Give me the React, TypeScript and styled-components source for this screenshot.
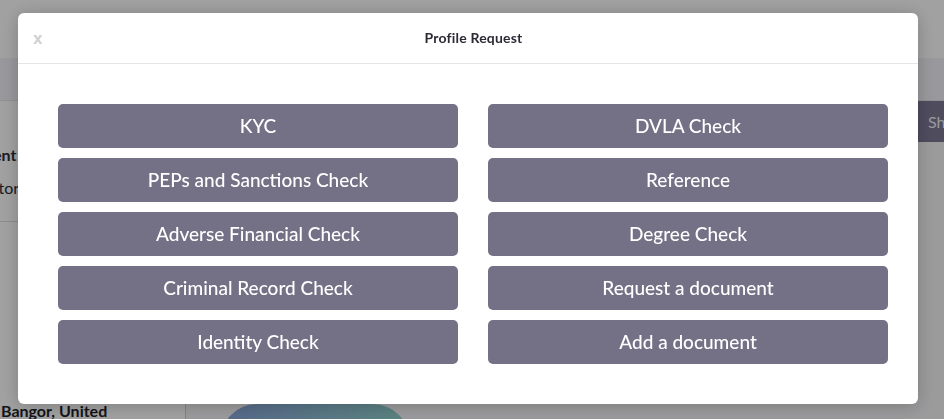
import React from "react";
import styled, { createGlobalStyle } from "styled-components";

const GlobalStyle = createGlobalStyle`
	html, body {
		margin: 0;
		padding: 0;
		height: 100%;
		overflow: hidden;
		font-family: Lato, "Open Sans", sans-serif;
		background: #f6f6f8;
	}
	#root {
		height: 100%;
	}
`;

const leftChecks = [
	"KYC",
	"PEPs and Sanctions Check",
	"Adverse Financial Check",
	"Criminal Record Check",
	"Identity Check"
];
const rightChecks = [
	"DVLA Check",
	"Reference",
	"Degree Check",
	"Request a document",
	"Add a document"
];

const Page = styled.div`
	height: 419px;
	display: flex;
	flex-direction: column;
	overflow: hidden;
`;
const TopBar = styled.header`
	height: 58px;
	background: #ffffff;
	flex-shrink: 0;
`;
const SubBar = styled.div`
	height: 42px;
	background: #f3f3f9;
	border-bottom: 1px solid #e4e4ea;
	flex-shrink: 0;
`;
const Body = styled.div`
	flex: 1;
	display: flex;
	min-height: 0;
`;
const Sidebar = styled.aside`
	width: 185px;
	background: #ffffff;
	border-right: 1px solid #cfcfd4;
	display: flex;
	flex-direction: column;
	overflow: hidden;
`;
const ProfileBlock = styled.div`
	height: 121px;
	border-bottom: 1px solid #dcdce0;
	padding-top: 44px;
	box-sizing: border-box;
`;
const Name = styled.div<{ $shift: number }>`
	margin-left: ${p => p.$shift}px;
	font-size: 16px;
	font-weight: 700;
	color: #2d2d3a;
	white-space: nowrap;
`;
const Role = styled.div<{ $shift: number }>`
	margin-left: ${p => p.$shift}px;
	margin-top: 14px;
	font-size: 16px;
	color: #2d2d3a;
	white-space: nowrap;
`;
const Location = styled.div`
	margin-top: auto;
	padding-left: 1px;
	height: 18px;
	font-size: 16px;
	font-weight: 700;
	color: #1f1f2a;
	white-space: nowrap;
`;
const Main = styled.main`
	flex: 1;
	display: flex;
	flex-direction: column;
	align-items: flex-end;
	overflow: hidden;
`;
const ShowButton = styled.button`
	width: 26px;
	height: 41px;
	border: none;
	background: #7d7996;
	color: #f2f2f6;
	font-family: Lato, sans-serif;
	font-size: 16px;
	text-align: left;
	padding: 0 0 0 10px;
	overflow: hidden;
	white-space: nowrap;
`;
const Avatar = styled.div`
	align-self: flex-start;
	margin: auto 0 -60px 34px;
	width: 190px;
	height: 75px;
	border-radius: 40px;
	background: linear-gradient(100deg, #8aa6dc 0%, #90d4cb 100%);
`;

const Overlay = styled.div`
	position: fixed;
	inset: 0;
	background: rgba(0, 0, 0, 0.37);
	padding: 13px 0 0 18px;
	box-sizing: border-box;
`;
const Modal = styled.div`
	width: 900px;
	height: 391px;
	background: #ffffff;
	border-radius: 6px;
	box-shadow: 0 2px 18px rgba(0, 0, 0, 0.22);
	display: flex;
	flex-direction: column;
`;
const ModalHeader = styled.div`
	height: 51px;
	border-bottom: 1px solid #e6e6e6;
	display: grid;
	grid-template-columns: 60px 1fr 60px;
	align-items: center;
	flex-shrink: 0;
	box-sizing: border-box;
`;
const CloseX = styled.span`
	padding-left: 15px;
	padding-top: 2px;
	font-family: "DejaVu Sans", sans-serif;
	font-size: 15px;
	font-weight: 700;
	color: #d2d2d2;
`;
const Title = styled.h2`
	margin: 0;
	padding: 0 0 2px 11px;
	text-align: center;
	font-size: 14px;
	font-weight: 700;
	color: #2b2b36;
	letter-spacing: 0.2px;
`;
const ModalBody = styled.div`
	padding: 40px 30px 0 40px;
	display: grid;
	grid-template-columns: 400px 400px;
	column-gap: 30px;
`;
const Column = styled.div`
	display: flex;
	flex-direction: column;
	gap: 10px;
`;
const CheckButton = styled.button`
	height: 44px;
	border: none;
	border-radius: 5px;
	background: #747187;
	color: #ffffff;
	font-family: Lato, sans-serif;
	font-size: 19px;
	font-weight: 500;
	cursor: pointer;
	padding: 0 0 2px 0;
`;

export default function App() {
	return (
		<>
			<GlobalStyle />
			<Page>
				<TopBar />
				<SubBar />
				<Body>
					<Sidebar>
						<ProfileBlock>
							<Name $shift={-62}>Jane Agent</Name>
							<Role $shift={-38}>Investor</Role>
						</ProfileBlock>
						<Location>Bangor, United</Location>
					</Sidebar>
					<Main>
						<ShowButton>Show</ShowButton>
						<Avatar />
					</Main>
				</Body>
			</Page>
			<Overlay>
				<Modal>
					<ModalHeader>
						<CloseX>x</CloseX>
						<Title>Profile Request</Title>
						<span />
					</ModalHeader>
					<ModalBody>
						<Column>
							{leftChecks.map(label => (
								<CheckButton key={label}>{label}</CheckButton>
							))}
						</Column>
						<Column>
							{rightChecks.map(label => (
								<CheckButton key={label}>{label}</CheckButton>
							))}
						</Column>
					</ModalBody>
				</Modal>
			</Overlay>
		</>
	);
}
